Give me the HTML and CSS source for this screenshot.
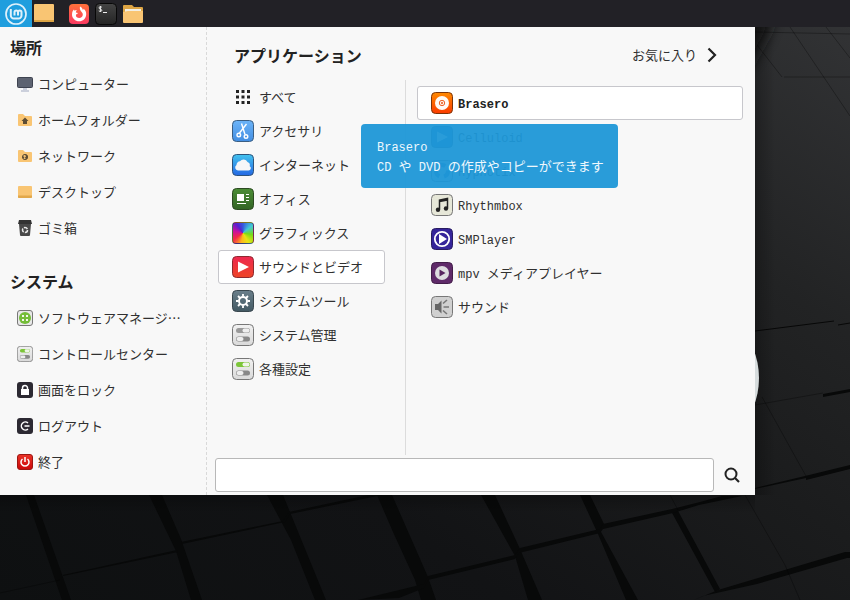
FILE: index.html
```html
<!DOCTYPE html>
<html lang="ja">
<head>
<meta charset="utf-8">
<title>アプリケーション</title>
<link rel="stylesheet" href="styles.css">
</head>
<body>
<svg class="wallpaper" viewBox="0 0 850 600" preserveAspectRatio="xMidYMid slice" aria-hidden="true">
  <defs>
    <linearGradient id="wall" x1="0" y1="1" x2="1" y2="0"><stop offset="0" stop-color="#0e1011"/><stop offset=".3" stop-color="#121315"/><stop offset=".55" stop-color="#1b1c1d"/><stop offset=".72" stop-color="#222324"/><stop offset="1" stop-color="#333436"/></linearGradient>
    <filter id="soft" x="-50%" y="-50%" width="200%" height="200%"><feGaussianBlur stdDeviation="7"/></filter>
    <linearGradient id="edge"><stop offset="0" stop-color="#000" stop-opacity=".25"/><stop offset="1" stop-color="#000" stop-opacity="0"/></linearGradient>
    <linearGradient id="edgeV" x2="0" y2="1"><stop offset="0" stop-color="#000" stop-opacity=".25"/><stop offset="1" stop-color="#000" stop-opacity="0"/></linearGradient>
  </defs>
  <path fill="url(#wall)" d="M0 0h850v600H0z"/>
  <path fill="#141517" filter="url(#soft)" d="M730 10h46l-8 24-18 32h-20z"/>
  <g fill="#080909">
    <path d="M26 495h8l37 105h-9zM149 495h13l19 44 21 61h-11l-15-49zM267 495h16l43 105h-11l-24-60zM377 495h15l36 82 8 23h-15l-6-20-22-48zM481 495h14l25 54 22 51h-14l-13-44zM580 495h10l14 29-4 6 38 70h-12l-28-66zM671 511l6-2 43 80-5 3z"/>
    <path d="M63 575l114-25 1 2-115 24zM181 542l102-21 6-9 79-17h14l-92 19-5 8-103 22zM358 600l66-16 4-8 87-21 5-7 80-19 3-5 69-15 28-7 22-6h20l-43 9-26 8-70 16-3 4-81 20-4 6-87 21-4 8-25 10zM755 488l50-12 45-11v4l-44 11v-2l-51 11zM694 600l24-10 127-38h5v6h-3l-90 26-54 12z"/>
    <path d="M823 394l27-5v3l-27 5z"/>
  </g>
  <g fill="none" stroke="#000" stroke-opacity=".5">
    <path stroke-opacity=".3" d="M755 32l95 2M790 27l60 89M826 27l24 31M757 45l25 32M784 77h66M755 405l68-12M762 397l44 79M745 495l40 70 15 35M670 495l8 15M0 593l60-13"/>
    <path stroke-opacity=".8" d="M755 331l79-10M838 325l12-2"/>
  </g>
  <path fill="url(#edge)" d="M755 27h20v468h-20z"/>
  <path fill="url(#edgeV)" d="M0 495h755v18H0z"/>
  <circle cx="681" cy="378" r="78" fill="#d6dcdd"/>
</svg>

<svg width="0" height="0" class="defs" aria-hidden="true">
  <defs>
    <linearGradient id="gBlue" x2="0" y2="1"><stop stop-color="#6cb4f8"/><stop offset="1" stop-color="#438ee2"/></linearGradient>
    <linearGradient id="gNet" x2="0" y2="1"><stop stop-color="#43c3ee"/><stop offset="1" stop-color="#2468e4"/></linearGradient>
    <linearGradient id="gGreen" x2="0" y2="1"><stop stop-color="#4b8d35"/><stop offset="1" stop-color="#336425"/></linearGradient>
    <linearGradient id="gRed" x2="0" y2="1"><stop stop-color="#ee2850"/><stop offset="1" stop-color="#ee4426"/></linearGradient>
    <linearGradient id="gSlate" x2="0" y2="1"><stop stop-color="#6a7f8b"/><stop offset="1" stop-color="#435963"/></linearGradient>
    <linearGradient id="gGray" x2="0" y2="1"><stop stop-color="#f1f1f1"/><stop offset="1" stop-color="#dadada"/></linearGradient>
    <linearGradient id="gOrange" x2="0" y2="1"><stop stop-color="#ff8a00"/><stop offset="1" stop-color="#fb3b00"/></linearGradient>
    <linearGradient id="gFox" x2="0" y2="1"><stop stop-color="#ff7139"/><stop offset="1" stop-color="#fb3a62"/></linearGradient>
    <linearGradient id="gTerm" x2="0" y2="1"><stop stop-color="#444"/><stop offset="1" stop-color="#242424"/></linearGradient>
    <linearGradient id="gPower" x2="0" y2="1"><stop stop-color="#e93428"/><stop offset="1" stop-color="#cc0809"/></linearGradient>
    <symbol id="toggleOff" viewBox="0 0 22 22"><rect x=".5" y=".5" width="21" height="21" rx="4" fill="url(#gGray)" stroke="#777"/><rect x="4" y="4" width="14" height="5" rx="2.500" fill="#999"/><rect x="10.500" y="4.500" width="7" height="4" rx="2" fill="#eee"/><rect x="4" y="12.500" width="14" height="5" rx="2.500" fill="#888"/><rect x="4.500" y="13" width="7" height="4" rx="2" fill="#eee"/></symbol>
    <symbol id="toggleOn" viewBox="0 0 22 22"><rect x=".5" y=".5" width="21" height="21" rx="4" fill="url(#gGray)" stroke="#777"/><rect x="4" y="4" width="14" height="5" rx="2.500" fill="#7cc539"/><rect x="10.500" y="4.500" width="7" height="4" rx="2" fill="#eff5e9"/><rect x="4" y="12.500" width="14" height="5" rx="2.500" fill="#888"/><rect x="4.500" y="13" width="7" height="4" rx="2" fill="#eee"/></symbol>
  </defs>
</svg>

<header class="panel">
  <button class="start" aria-label="メニュー"><svg class="icon" viewBox="0 0 22 22" fill="none" stroke="#dff1fb"><circle cx="11" cy="11" r="10" stroke-width="1.700"/><path stroke-width="2" d="M5.800 6v6.500a3 3 0 0 0 3 3h4.700a3 3 0 0 0 3-3V9.300a1.700 1.700 0 0 0-3.500 0V12.500M13 12V9.300a1.700 1.700 0 0 0-3.500 0V12.500"/></svg></button>
  <button aria-label="デスクトップを表示"><svg class="icon" viewBox="0 0 22 22"><rect x="1" y="1" width="20" height="18" rx="1" fill="#f9c573"/><path fill="#dda544" d="M1 17h20v1a1 1 0 0 1-1 1H2a1 1 0 0 1-1-1z"/></svg></button>
  <nav class="launchers">
    <button aria-label="Firefox"><svg class="icon" viewBox="0 0 22 22"><rect x="1" y="1" width="20" height="20" rx="4" fill="url(#gFox)"/><path fill="#fff" d="M12 3.500c2 1 2.800 2.500 2.800 3.500.6-.3.800-.7.900-1.200 1.800 1.500 2.600 3.400 2.500 5.600-.2 4-3.300 6.800-7.100 6.800S4 15.300 4 11.400C4 9 5 7.300 6 6.500l.4 1.300c.8-.5 1.600-.6 2.500-.4-.8.600-1.200 1.400-1 2l2 .6c-.3 1.200-2 1-2 2.300 0 1.700 1.500 2.800 3.300 2.800 2 0 3.600-1.600 3.600-3.600 0-1.500-1-2.300-1.800-3.300-.9-1.200-1.500-2.500-1-4.700z"/></svg></button>
    <button aria-label="端末"><svg class="icon" viewBox="0 0 22 22"><rect x=".5" y=".5" width="21" height="21" rx="4" fill="url(#gTerm)" stroke="#080808"/><path d="M6.800 4.200C5.500 3.300 4 3.800 4 5s2.800 1 2.800 2.300S5 8.700 3.800 7.900M5.400 3v6M8 9.500h4" fill="none" stroke="#eee"/></svg></button>
    <button aria-label="ファイル"><svg class="icon" viewBox="0 0 22 22"><path fill="#dda544" d="M1 3a1 1 0 0 1 1-1h8l2 2h8a1 1 0 0 1 1 1v9H1z"/><path fill="#f3efe4" d="M3 6h16v4H3z"/><path fill="#f9c573" d="M1 9c2 0 3-1 5-1h15v11a1 1 0 0 1-1 1H2a1 1 0 0 1-1-1z"/></svg></button>
  </nav>
</header>

<main class="menu">
  <aside class="sidebar">
    <section>
      <h2>場所</h2>
      <button class="place"><svg class="small" viewBox="0 0 16 16"><path fill="#ccd0dc" d="M6 11h4v3h2v2H4v-2h2z"/><rect x=".5" y="1.500" width="15" height="10" rx="1" fill="#5d6371" stroke="#3e4350"/></svg>コンピューター</button>
      <button class="place"><svg class="small" viewBox="0 0 16 16"><path fill="#f9c573" d="M1 3a1 1 0 0 1 1-1h4l2 2h6a1 1 0 0 1 1 1v8a1 1 0 0 1-1 1H2a1 1 0 0 1-1-1z"/><path fill="#5d4d35" d="M8 5.500L4.500 9H6v3h4V9h1.500z"/></svg>ホームフォルダー</button>
      <button class="place"><svg class="small" viewBox="0 0 16 16"><path fill="#f9c573" d="M1 3a1 1 0 0 1 1-1h4l2 2h6a1 1 0 0 1 1 1v8a1 1 0 0 1-1 1H2a1 1 0 0 1-1-1z"/><circle cx="8" cy="9" r="2.600" fill="none" stroke="#5d4d35"/><path fill="#5d4d35" d="M8 6.500l1 2-1 1 1 2a2.600 2.600 0 0 0 0-5zM5.500 8l2 1-1 2z"/></svg>ネットワーク</button>
      <button class="place"><svg class="small" viewBox="0 0 16 16"><rect x="1" y="2" width="14" height="12" rx="1" fill="#f9c573"/><path fill="#e2a84b" d="M1 11.500h14V13a1 1 0 0 1-1 1H2a1 1 0 0 1-1-1z"/></svg>デスクトップ</button>
      <button class="place"><svg class="small" viewBox="0 0 16 16"><path fill="#484848" d="M2 4h12l-1 11a1 1 0 0 1-1 1H4a1 1 0 0 1-1-1z"/><path fill="#333" d="M2 0h12l1 4H1z"/><circle cx="8" cy="10" r="2.500" fill="none" stroke="#e8e8e8" stroke-width="1.500" stroke-dasharray="4 1.200"/></svg>ゴミ箱</button>
    </section>
    <section>
      <h2>システム</h2>
      <button class="place"><svg class="small" viewBox="0 0 16 16"><rect x=".5" y=".5" width="15" height="15" rx="2.500" fill="#e8e8e8" stroke="#777"/><circle cx="8" cy="8" r="6" fill="#74bd38"/><path fill="#f2f6ec" d="M5 5h2v2H5zM9 5h2v2H9zM5 9h2v2H5zM9 9h2v2H9z"/></svg>ソフトウェアマネージ…</button>
      <button class="place"><svg class="small"><use href="#toggleOn"/></svg>コントロールセンター</button>
      <button class="place"><svg class="small" viewBox="0 0 16 16"><rect width="16" height="16" rx="3" fill="#2c2932"/><path fill="#fff" d="M4 7h8v6H4z"/><path d="M5.500 7.500V6a2.500 2.500 0 0 1 5 0v1.500" fill="none" stroke="#fff" stroke-width="1.500"/></svg>画面をロック</button>
      <button class="place"><svg class="small" viewBox="0 0 16 16"><rect width="16" height="16" rx="3" fill="#2c2932"/><path d="M11 5a4 4 0 1 0 0 6M7.500 8h5" fill="none" stroke="#fff" stroke-width="1.500"/></svg>ログアウト</button>
      <button class="place"><svg class="small" viewBox="0 0 16 16"><rect x=".5" y=".5" width="15" height="15" rx="2.500" fill="url(#gPower)" stroke="#9d1712"/><path d="M5.500 5a4 4 0 1 0 5 0M8 3v5" fill="none" stroke="#fff" stroke-width="1.500"/></svg>終了</button>
    </section>
  </aside>

  <section class="content">
    <div class="titlebar">
      <h1>アプリケーション</h1>
      <button class="favorites">お気に入り<svg class="chevron" viewBox="0 0 10 16"><path d="M1.500 1.500L8 8l-6.500 6.500" fill="none" stroke="#222" stroke-width="2.200"/></svg></button>
    </div>
    <div class="browser">
      <nav class="categories">
        <button class="item"><svg class="icon" viewBox="0 0 22 22" fill="#222"><path d="M4 4h3v3H4zM9.500 4h3v3h-3zM15 4h3v3h-3zM4 9.500h3v3H4zM9.500 9.500h3v3h-3zM15 9.500h3v3h-3zM4 15h3v3H4zM9.500 15h3v3h-3zM15 15h3v3h-3z"/></svg>すべて</button>
        <button class="item"><svg class="icon" viewBox="0 0 22 22"><rect x=".5" y=".5" width="21" height="21" rx="4" fill="url(#gBlue)" stroke="#3b5e82"/><g fill="none" stroke="#fff" stroke-width="1.400"><path d="M9.500 3.500l3.500 11M14.500 4L7.500 13"/><circle cx="6.800" cy="15" r="1.800"/><circle cx="14" cy="16.500" r="1.800"/></g></svg>アクセサリ</button>
        <button class="item"><svg class="icon" viewBox="0 0 22 22"><rect x=".5" y=".5" width="21" height="21" rx="4" fill="url(#gNet)" stroke="#2d537b"/><path fill="#f6f6f8" d="M6 16.500a3 3 0 0 1-1.500-5.500A3.500 3.500 0 0 1 8 7.300 4.500 4.500 0 0 1 15.500 8a3.500 3.500 0 0 1 2.200 4.200 2.300 2.300 0 0 1-1.200 4.300z"/></svg>インターネット</button>
        <button class="item"><svg class="icon" viewBox="0 0 22 22"><rect x=".5" y=".5" width="21" height="21" rx="4" fill="url(#gGreen)" stroke="#2c4a22"/><path fill="#fff" d="M5 6h7v7H5zM14 6h3v1h-3zM14 9h3v1h-3zM14 12h3v1h-3zM5 15h9v1H5z"/></svg>オフィス</button>
        <button class="item"><span class="icon spectrum"></span>グラフィックス</button>
        <button class="item selected"><svg class="icon" viewBox="0 0 22 22"><rect x=".5" y=".5" width="21" height="21" rx="4" fill="url(#gRed)" stroke="#8d2a30"/><path fill="#fff" d="M6 5.500L17 11 6 16.500z"/></svg>サウンドとビデオ</button>
        <button class="item"><svg class="icon" viewBox="0 0 22 22"><rect x=".5" y=".5" width="21" height="21" rx="4" fill="url(#gSlate)" stroke="#39474e"/><circle cx="11" cy="11" r="4" fill="none" stroke="#fff" stroke-width="2"/><path d="M11 4v2.500M11 15.500V18M4 11h2.500M15.500 11H18M6 6l2 2M14 14l2 2M6 16l2-2M14 8l2-2" stroke="#fff" stroke-width="1.800"/></svg>システムツール</button>
        <button class="item"><svg class="icon"><use href="#toggleOff"/></svg>システム管理</button>
        <button class="item"><svg class="icon"><use href="#toggleOn"/></svg>各種設定</button>
      </nav>
      <div class="apps">
        <div class="anchor">
          <button class="item selected" aria-describedby="tip"><svg class="icon" viewBox="0 0 22 22"><rect x=".5" y=".5" width="21" height="21" rx="4" fill="url(#gOrange)" stroke="#7c3408"/><circle cx="11" cy="11" r="7" fill="#fffaf5"/><circle cx="11" cy="11" r="2.700" fill="none" stroke="#ee6326"/><circle cx="11" cy="11" r="1.200" fill="#ee7b48"/></svg><span><span class="latin">Brasero</span></span></button>
          <div class="tooltip" role="tooltip" id="tip"><span class="latin">Brasero</span><br><span class="latin">CD </span>や<span class="latin"> DVD </span>の作成やコピーができます</div>
        </div>
        <button class="item"><svg class="icon" viewBox="0 0 22 22"><rect x=".5" y=".5" width="21" height="21" rx="4" fill="#2675c0" stroke="#285475"/><path fill="#fff" d="M6 5.500L17 11 6 16.500z"/></svg><span><span class="latin">Celluloid</span></span></button>
        <button class="item"><svg class="icon" viewBox="0 0 22 22"><rect x=".5" y=".5" width="21" height="21" rx="4" fill="#e5e5e5" stroke="#777"/><circle cx="11" cy="11" r="6" fill="none" stroke="#2675c0" stroke-width="4" stroke-dasharray="7 5"/></svg><span><span class="latin">Hypnotix</span></span></button>
        <button class="item"><svg class="icon" viewBox="0 0 22 22"><rect x=".5" y=".5" width="21" height="21" rx="4" fill="#e6e7d8" stroke="#777"/><path d="M8.500 15.500V6l8-1.500V14M8.500 7.500l8-1.500" fill="none" stroke="#222" stroke-width="1.500"/><circle cx="7" cy="15.800" r="2.200" fill="#222"/><circle cx="15" cy="14.500" r="2.200" fill="#222"/></svg><span><span class="latin">Rhythmbox</span></span></button>
        <button class="item"><svg class="icon" viewBox="0 0 22 22"><rect x=".5" y=".5" width="21" height="21" rx="4" fill="#35249a" stroke="#291c61"/><circle cx="11" cy="11" r="7.200" fill="none" stroke="#fff" stroke-width="1.800"/><path fill="#fff" d="M8 6l8 5-8 5z"/></svg><span><span class="latin">SMPlayer</span></span></button>
        <button class="item"><svg class="icon" viewBox="0 0 22 22"><rect x=".5" y=".5" width="21" height="21" rx="4" fill="#5f2a69" stroke="#421d49"/><circle cx="11" cy="11" r="7" fill="#dedce0"/><path fill="#582560" d="M8.500 7.500L14.500 11l-6 3.500z"/></svg><span><span class="latin">mpv </span>メディアプレイヤー</span></button>
        <button class="item"><svg class="icon" viewBox="0 0 22 22"><rect x=".5" y=".5" width="21" height="21" rx="4" fill="#d0d0d0" stroke="#777"/><path fill="#666" d="M4 8h3l3.500-3.500v13L7 14H4z"/><path d="M12 7.500L16 4M12.500 11H18M12 14.500l4 3.500" stroke="#777" stroke-width="1.600"/></svg>サウンド</button>
      </div>
    </div>
    <form class="search">
      <input type="search" id="query" aria-label="検索">
      <label for="query"><svg class="magnifier" viewBox="0 0 16 16" fill="none" stroke="#222"><circle cx="7" cy="7" r="5.500" stroke-width="2"/><path d="M11 11l4 4" stroke-width="2.200"/></svg></label>
    </form>
  </section>
</main>
</body>
</html>
```

FILE: styles.css
```css
* {
  box-sizing: border-box;
}

body {
  margin: 0;
  min-height: 100vh;
  background: #151617;
  color: #303030;
  font: 13px/20px "Noto Sans CJK JP", sans-serif;
}

.wallpaper {
  position: fixed;
  inset: 0;
  z-index: -1;
  width: 100%;
  height: 100%;
}

.defs {
  position: absolute;
}

button {
  margin: 0;
  padding: 0;
  border: 0;
  background: none;
  color: inherit;
  font: inherit;
  text-align: left;
}

h1,
h2 {
  margin: 0;
  color: #222;
  font-size: 16px;
  font-weight: 700;
  line-height: 24px;
}

.icon,
.small {
  display: block;
  flex: none;
}

.icon {
  width: 22px;
  height: 22px;
}

.small {
  width: 16px;
  height: 16px;
}

.latin {
  font-family: "Liberation Mono", monospace;
  font-size: 12px;
  line-height: 12px;
  white-space: pre;
}

.panel {
  display: flex;
  align-items: center;
  gap: 1px;
  height: 27px;
  background: #222126;
}

.start {
  display: grid;
  place-items: center;
  width: 32px;
  height: 100%;
  background: #1f9ede;
}

.launchers {
  display: flex;
  gap: 5px;
  margin-left: 12px;
}

.menu {
  display: flex;
  max-width: 755px;
  background: #f8f8f8;
}

.sidebar {
  display: flex;
  flex: 0 0 207px;
  flex-direction: column;
  gap: 18px;
  padding: 3px 8px 15px 10px;
  border-right: 1px dashed #d9d9d9;
}

.sidebar h2 {
  padding: 5px 0 7px;
}

.place {
  display: flex;
  align-items: center;
  gap: 5px;
  width: 100%;
  height: 36px;
  padding-left: 7px;
  white-space: nowrap;
}

.content {
  flex: 1;
  min-width: 0;
  padding: 0 0 3px 8px;
}

.titlebar {
  display: flex;
  align-items: center;
  justify-content: space-between;
  height: 53px;
  padding: 2px 38px 0 19px;
}

.favorites {
  display: flex;
  align-items: center;
  gap: 10px;
}

.chevron {
  width: 10px;
  height: 16px;
}

.browser {
  display: flex;
  min-height: 375px;
}

.categories {
  flex: 0 0 191px;
  padding: 0 20px 0 3px;
  border-right: 1px solid #dcdcdc;
}

.apps {
  flex: 1;
  padding: 6px 12px 0 11px;
}

.item {
  display: flex;
  align-items: center;
  gap: 5px;
  width: 100%;
  height: 34px;
  padding-left: 13px;
  border: 1px solid transparent;
  border-radius: 3px;
  line-height: 22px;
  white-space: nowrap;
}

.item.selected {
  border-color: #c7c7cc;
  background: #fff;
}

.apps .selected {
  color: #222;
  font-weight: 700;
}

.spectrum {
  border: 1px solid rgba(50, 50, 50, 0.6);
  border-radius: 4px;
  background: conic-gradient(#3758dd, #43c8d8 50deg, #77dc16 100deg, #e8e514 150deg, #ffb51c 190deg, #f32949 235deg, #c811a0 285deg, #5720d0 325deg, #3758dd);
}

.anchor {
  position: relative;
}

.tooltip {
  position: absolute;
  top: 38px;
  left: -56px;
  z-index: 1;
  padding: 12px 14px 12px 16px;
  border-radius: 4px;
  background: rgba(29, 151, 215, 0.95);
  color: #eef8fd;
  white-space: nowrap;
}

.search {
  display: flex;
  align-items: center;
  gap: 10px;
  margin-top: 3px;
  padding-right: 15px;
}

.search input {
  flex: 1;
  min-width: 0;
  height: 34px;
  margin: 0;
  padding: 0 10px;
  border: 1px solid #b8b8b8;
  border-radius: 3px;
  background: #fff;
  color: inherit;
  font: inherit;
}

.magnifier {
  display: block;
  width: 16px;
  height: 16px;
}
```
